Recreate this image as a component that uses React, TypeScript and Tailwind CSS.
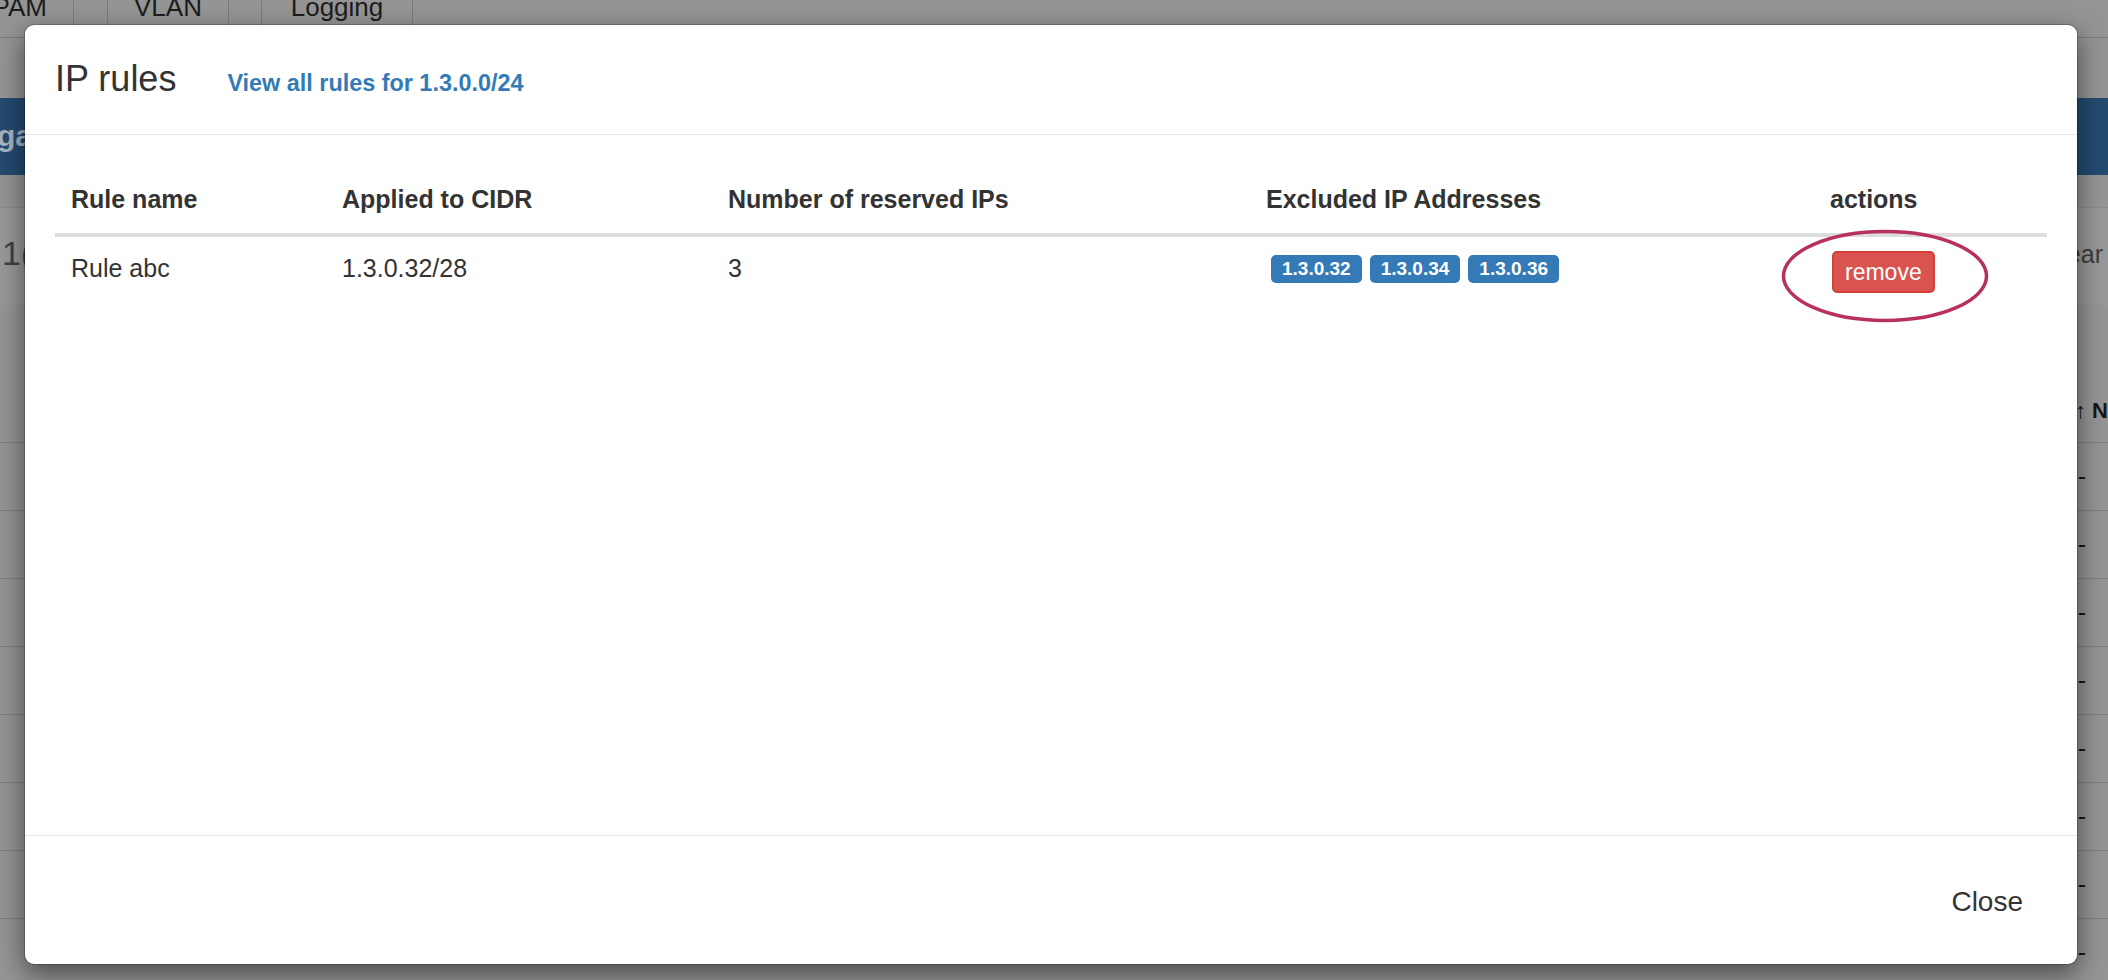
import { Fragment } from 'react';

const FONT = "font-['Liberation_Sans',Arial,'Helvetica_Neue',sans-serif]";

const rule = {
  name: 'Rule abc',
  cidr: '1.3.0.32/28',
  reserved: 3,
  excluded: ['1.3.0.32', '1.3.0.34', '1.3.0.36'],
};

/* page behind the backdrop — already darkened */
function Backdrop() {
  return (
    <div className="flex flex-col h-[980px] w-full bg-[#959595] overflow-hidden">
      {/* tabs, cut off at the top */}
      <div className="flex h-[38px] shrink-0 border-b border-[#7c7c7c] text-[26px] text-[#1c1c1c]">
        <div className="w-[74px] border-r border-[#7c7c7c] flex justify-end pr-[26px]">
          <span className="-mt-[6px] leading-[26px] whitespace-nowrap">IPAM</span>
        </div>
        <div className="w-[33px]" />
        <div className="w-[122px] border-x border-[#7c7c7c] flex justify-center">
          <span className="-mt-[6px] leading-[26px]">VLAN</span>
        </div>
        <div className="w-[32px]" />
        <div className="w-[152px] border-x border-[#7c7c7c] flex justify-center">
          <span className="-mt-[6px] leading-[26px]">Logging</span>
        </div>
      </div>

      <div className="h-[60px] shrink-0" />

      {/* blue title bar */}
      <div className="h-[77px] shrink-0 bg-[#244b70] flex items-center">
        <span className="-ml-[3px] text-[30px] font-bold text-[#a7b4c2] leading-none -mt-[2px]">ga</span>
      </div>

      <div className="h-[32px] shrink-0" />

      <div className="h-[98px] shrink-0 bg-[#999999] border-t border-[#8c8c8c] flex items-center justify-between">
        <span className="pl-[2px] text-[34px] text-[#39414b] leading-none -mt-[7px]">1(</span>
        <span className="pr-[5px] text-[25px] text-[#3c3c3c] leading-none -mt-[4px]">Clear</span>
      </div>

      <div className="h-[137px] shrink-0 flex items-end justify-end pb-[20px]">
        <span className="text-[22px] font-bold text-[#161616] leading-none whitespace-nowrap">↓↑ N</span>
      </div>

      {Array.from({ length: 8 }).map((_, i) => (
        <div
          key={i}
          className="h-[68px] shrink-0 border-t border-[#7f7f7f] flex items-center justify-end pr-[22px]"
        >
          <span className="text-[25px] text-[#151515] leading-none">-</span>
        </div>
      ))}
    </div>
  );
}

export default function App() {
  return (
    <div className={`relative w-full h-[980px] overflow-hidden ${FONT}`}>
      <Backdrop />

      {/* modal */}
      <div className="absolute left-[24px] top-[24px] w-[2054px] h-[941px] flex flex-col bg-white rounded-[10px] border border-black/20 bg-clip-padding shadow-[0_9px_27px_rgba(0,0,0,0.5)] text-[#333]">
        {/* header */}
        <div className="h-[110px] shrink-0 border-b border-[#e5e5e5] flex items-center px-[30px]">
          <div className="flex items-baseline mt-[2px]">
            <h4 className="text-[36px] leading-[40px] font-normal">IP rules</h4>
            <a className="ml-[51px] text-[23.4px] font-bold text-[#337ab7]" href="#">
              View all rules for 1.3.0.0/24
            </a>
          </div>
        </div>

        {/* body */}
        <div className="flex-1 px-[30px] pt-[30px]">
          <div className="grid grid-cols-[271px_386px_538px_564px_1fr] border-b-4 border-[#dddddd] text-[25px] leading-[36px] font-bold">
            {['Rule name', 'Applied to CIDR', 'Number of reserved IPs', 'Excluded IP Addresses', 'actions'].map((h) => (
              <div key={h} className="px-[16px] py-[16px] whitespace-nowrap">
                {h}
              </div>
            ))}
          </div>

          <div className="grid grid-cols-[271px_386px_538px_564px_1fr] text-[25px] leading-[36px]">
            <div className="px-[16px] pt-[13px]">{rule.name}</div>
            <div className="px-[16px] pt-[13px]">{rule.cidr}</div>
            <div className="px-[16px] pt-[13px]">{rule.reserved}</div>
            <div className="px-[16px] pt-[18px]">
              <div className="flex gap-[8px] ml-[5px]">
                {rule.excluded.map((ip) => (
                  <Fragment key={ip}>
                    <span className="bg-[#337ab7] text-white font-bold text-[19px] leading-[19px] px-[11px] pt-[4px] pb-[5px] rounded-[5px]">
                      {ip}
                    </span>
                  </Fragment>
                ))}
              </div>
            </div>
            <div className="relative px-[16px] pt-[14px]">
              <button className="ml-[2px] bg-[#d9534f] border-2 border-[#d43f3a] text-white text-[23px] leading-[30px] px-[11px] py-[4px] rounded-[5px]">
                remove
              </button>
              {/* annotation ring */}
              <svg
                className="absolute left-[-33px] top-[-8px] pointer-events-none"
                width="208"
                height="94"
                viewBox="0 0 208 94"
                fill="none"
              >
                <ellipse cx="104" cy="47" rx="101.5" ry="44.5" stroke="#b8305f" strokeWidth="3.5" />
              </svg>
            </div>
          </div>
        </div>

        {/* footer */}
        <div className="h-[129px] shrink-0 border-t border-[#e5e5e5] flex items-center justify-end pr-[54px]">
          <button className="text-[28px] leading-[40px] text-[#333] pt-[3px]">Close</button>
        </div>
      </div>
    </div>
  );
}
